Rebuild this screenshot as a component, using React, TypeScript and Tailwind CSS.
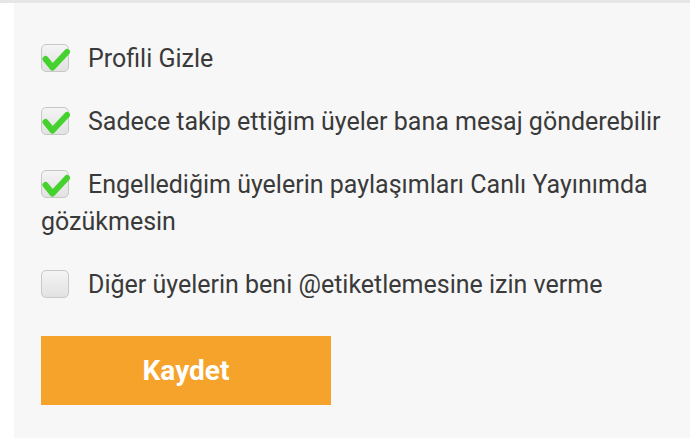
import React, { useState } from 'react'

const options = [
    { label: 'Profili Gizle', checked: true },
    { label: 'Sadece takip ettiğim üyeler bana mesaj gönderebilir', checked: true },
    { label: 'Engellediğim üyelerin paylaşımları Canlı Yayınımda gözükmesin', checked: true },
    { label: 'Diğer üyelerin beni @etiketlemesine izin verme', checked: false },
]

const CheckBox = ({ checked }: { checked: boolean }) => (
    <span className="relative mr-[19px] inline-block h-[28px] w-[28px] rounded-[5px] border border-[#c8c8c8] bg-gradient-to-b from-[#f4f4f4] to-[#e2e2e2] align-[-5px]">
        {checked && (
            <svg
                className="absolute left-[-1px] top-[-1px] overflow-visible"
                width="28"
                height="28"
                viewBox="0 0 28 28"
            >
                <path
                    d="M4.5 15 L11.5 23.5 L26 8"
                    fill="none"
                    stroke="#45d22f"
                    strokeWidth="6"
                    strokeLinecap="round"
                    strokeLinejoin="round"
                />
            </svg>
        )}
    </span>
)

export default function App() {
    const [items, setItems] = useState(options)

    const toggle = (index: number) => {
        const updated = [...items]
        updated[index] = { ...updated[index], checked: !updated[index].checked }
        setItems(updated)
    }

    return (
        <div className="h-[443px] w-[690px] overflow-hidden bg-white font-['Roboto',sans-serif]">
            <div className="h-[3px] bg-[#e6e6e6]" />
            <div className="ml-[14px] h-[435px] bg-[#f7f7f7] pl-[27px] pr-[10px] pt-[37px]">
                {items.map((item, index) => (
                    <p
                        key={index}
                        onClick={() => toggle(index)}
                        className="mb-[26px] cursor-pointer text-[25px] leading-[37px] text-[#3a3a3a]"
                    >
                        <CheckBox checked={item.checked} />
                        {item.label}
                    </p>
                ))}
                <button className="mt-[7px] h-[69px] w-[290px] bg-[#f6a32b] text-[28px] font-bold text-white">
                    Kaydet
                </button>
            </div>
        </div>
    )
}
